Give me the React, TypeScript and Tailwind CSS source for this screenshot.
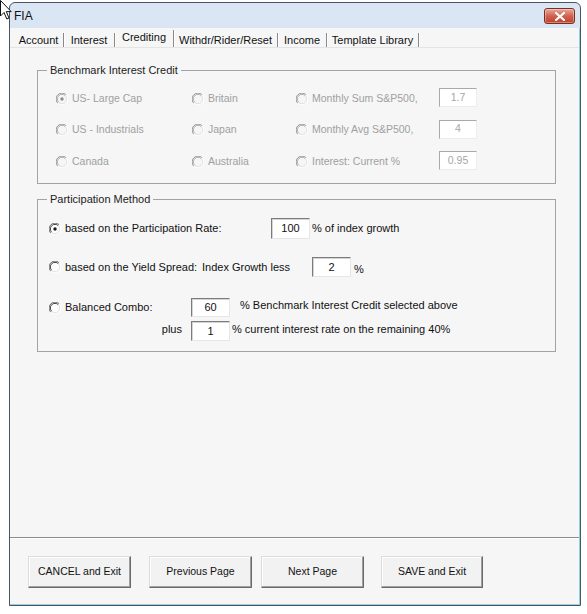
import React from "react";

const sans = "font-['Liberation_Sans',Arial,sans-serif]";

function Radio({ checked = false, disabled = false }: { checked?: boolean; disabled?: boolean }) {
  const dark = disabled ? "#939393" : "#6e6e6e";
  const darker = disabled ? "#b0b0b0" : "#3c3c3c";
  return (
    <svg width="12" height="12" viewBox="0 0 12 12" className="shrink-0">
      <circle cx="6" cy="6" r="5" fill={disabled ? "#f6f6f6" : "#ffffff"} />
      <path d="M10.2 1.8 A5.6 5.6 0 0 0 1.8 10.2" stroke={dark} strokeWidth="1" fill="none" />
      <path d="M9.3 2.7 A4.6 4.6 0 0 0 2.7 9.3" stroke={darker} strokeWidth="1" fill="none" />
      <path d="M1.8 10.2 A5.6 5.6 0 0 0 10.2 1.8" stroke="#ffffff" strokeWidth="1" fill="none" />
      <path d="M2.7 9.3 A4.6 4.6 0 0 0 9.3 2.7" stroke="#e2e2e2" strokeWidth="1" fill="none" />
      {checked && <circle cx="6" cy="6" r="1.7" fill={disabled ? "#8e8e8e" : "#1a1a1a"} />}
    </svg>
  );
}

function Field({ value, disabled = false, className = "" }: { value: string; disabled?: boolean; className?: string }) {
  return (
    <div
      className={`flex items-center justify-center border bg-white ${
        disabled
          ? "border-t-[#a9a9a9] border-l-[#a9a9a9] border-r-[#ececec] border-b-[#ececec] text-[#a6a6a6] text-[10.5px]"
          : "border-t-[#7c7c7c] border-l-[#7c7c7c] border-r-[#e6e6e6] border-b-[#e6e6e6] text-[#111] text-[11px] shadow-[inset_1px_1px_0_#d4d4d4]"
      } ${className}`}
    >
      {value}
    </div>
  );
}

function Button({ label, w }: { label: string; w: string }) {
  return (
    <button
      className={`${w} h-[32px] shrink-0 flex items-center justify-center bg-[#f2f2f2] border border-t-[#dcdcdc] border-l-[#dcdcdc] border-r-[#6a6a6a] border-b-[#6a6a6a] shadow-[inset_-1px_-1px_0_#a0a0a0,inset_1px_1px_0_#ffffff] text-[10.5px] text-[#111]`}
    >
      {label}
    </button>
  );
}

const tabs = [
  { label: "Account", w: "w-[50px]" },
  { label: "Interest", w: "w-[51px]" },
  { label: "Crediting", w: "w-[59px]", active: true },
  { label: "Withdr/Rider/Reset", w: "w-[104px]" },
  { label: "Income", w: "w-[49px]" },
  { label: "Template Library", w: "w-[92px]" },
];

const benchmark: { label: string; checked?: boolean }[][] = [
  [{ label: "US- Large Cap", checked: true }, { label: "Britain" }, { label: "Monthly Sum S&P500," }],
  [{ label: "US - Industrials" }, { label: "Japan" }, { label: "Monthly Avg S&P500," }],
  [{ label: "Canada" }, { label: "Australia" }, { label: "Interest: Current %" }],
];
const benchmarkValues = ["1.7", "4", "0.95"];

export default function App() {
  return (
    <div className={`relative w-[587px] h-[614px] bg-white overflow-hidden ${sans}`}>
      {/* mouse pointer */}
      <svg className="absolute left-0 top-0 z-10" width="14" height="22" viewBox="0 0 14 22">
        <path d="M0.5 0.5 L0.5 16 L4 12.5 L6.8 19 L9 18 L6.3 11.6 L11.2 11.6 Z" fill="#ffffff" stroke="#111" strokeWidth="1" />
      </svg>

      {/* window */}
      <div className="ml-[9px] mt-[2px] w-[572px] h-[604px] flex flex-col border border-[#4a5563] rounded-t-[6px] bg-gradient-to-b from-[#dbe6f4] to-[#c4d6ee]">
        {/* title bar */}
        <div className="h-[25px] shrink-0 flex items-center justify-between pl-[4px] pr-[5px]">
          <span className="text-[12px] text-[#111] leading-none mt-[1px]">FIA</span>
          <div className="w-[31px] h-[16px] mt-[1px] rounded-[3px] border border-[#7d2d22] bg-gradient-to-b from-[#e9a99b] via-[#d0624f] to-[#c0402c] flex items-center justify-center shadow-[inset_0_0_0_1px_rgba(255,255,255,0.35)]">
            <svg width="10" height="9" viewBox="0 0 10 9">
              <path d="M1 1 L9 8 M9 1 L1 8" stroke="#ffffff" strokeWidth="2.2" strokeLinecap="square" />
            </svg>
          </div>
        </div>

        {/* client area */}
        <div className="flex-1 flex flex-col bg-[#f6f6f6] border-r border-b border-[#8fd0e3]">
          {/* tab strip */}
          <div className="h-[19px] shrink-0 flex items-end pl-[4px] text-[11px] text-[#111]">
            {tabs.map((t) => (
              <div
                key={t.label}
                className={`${t.w} flex items-center justify-center border-r border-[#8a8a8a] shadow-[1px_0_0_#ffffff] ${
                  t.active ? "h-[17px] pb-[3px]" : "h-[14px]"
                }`}
              >
                {t.label}
              </div>
            ))}
          </div>

          {/* page */}
          <div className="h-[490px] shrink-0 border-t border-[#e4e4e4] pl-[27px] pr-[20px]">
            <fieldset className="mt-[16px] w-[519px] h-[120px] border border-[#a3a3a3]">
              <legend className="px-[3px] ml-[9px] text-[11px] leading-[13px] text-[#222]">Benchmark Interest Credit</legend>
              <div className="mt-[6px] pl-[18px] grid grid-cols-[136px_104px_143px_38px] auto-rows-[31.5px] text-[10.5px] text-[#a0a0a0]">
                {benchmark.map((row, r) => (
                  <React.Fragment key={r}>
                    {row.map((c) => (
                      <div key={c.label} className="flex items-center gap-[4px]">
                        <Radio checked={c.checked} disabled />
                        <span>{c.label}</span>
                      </div>
                    ))}
                    <div className="flex items-center">
                      <Field value={benchmarkValues[r]} disabled className="w-[38px] h-[19px] -mt-[2px]" />
                    </div>
                  </React.Fragment>
                ))}
              </div>
            </fieldset>

            <fieldset className="mt-[9px] w-[519px] h-[159px] border border-[#a3a3a3] text-[11px] text-[#111]">
              <legend className="px-[3px] ml-[9px] text-[11px] leading-[13px] text-[#222]">Participation Method</legend>
              <div className="mt-[12px] pl-[11px] flex flex-col">
                <div className="h-[21px] flex items-center">
                  <Radio checked />
                  <span className="ml-[4px] w-[206px]">based on the Participation Rate:</span>
                  <Field value="100" className="w-[39px] h-[21px]" />
                  <span className="ml-[2px]">% of index growth</span>
                </div>
                <div className="mt-[18px] h-[20px] flex items-center">
                  <Radio />
                  <span className="ml-[4px] w-[137px]">based on the Yield Spread:</span>
                  <span className="w-[110px]">Index Growth less</span>
                  <Field value="2" className="w-[39px] h-[20px]" />
                  <span className="ml-[3px] mt-[4px]">%</span>
                </div>
                <div className="mt-[21px] h-[19px] flex items-center">
                  <Radio />
                  <span className="ml-[4px] w-[126px]">Balanced Combo:</span>
                  <Field value="60" className="w-[39px] h-[19px]" />
                  <span className="ml-[10px] -mt-[4px]">% Benchmark Interest Credit selected above</span>
                </div>
                <div className="mt-[4px] h-[20px] flex items-center">
                  <span className="w-[142px] text-right pr-[9px] -mt-[3px]">plus</span>
                  <Field value="1" className="w-[39px] h-[20px]" />
                  <span className="ml-[2px] -mt-[4px]">% current interest rate on the remaining 40%</span>
                </div>
              </div>
            </fieldset>
          </div>

          {/* command bar */}
          <div className="flex-1 border-t border-[#8c8c8c] shadow-[inset_0_1px_0_#ffffff] pt-[18px] pl-[18px] flex">
            <Button label="CANCEL and Exit" w="w-[103px]" />
            <div className="w-[18px] shrink-0" />
            <Button label="Previous Page" w="w-[103px]" />
            <div className="w-[9px] shrink-0" />
            <Button label="Next Page" w="w-[103px]" />
            <div className="w-[17px] shrink-0" />
            <Button label="SAVE and Exit" w="w-[102px]" />
          </div>
        </div>
      </div>
    </div>
  );
}
